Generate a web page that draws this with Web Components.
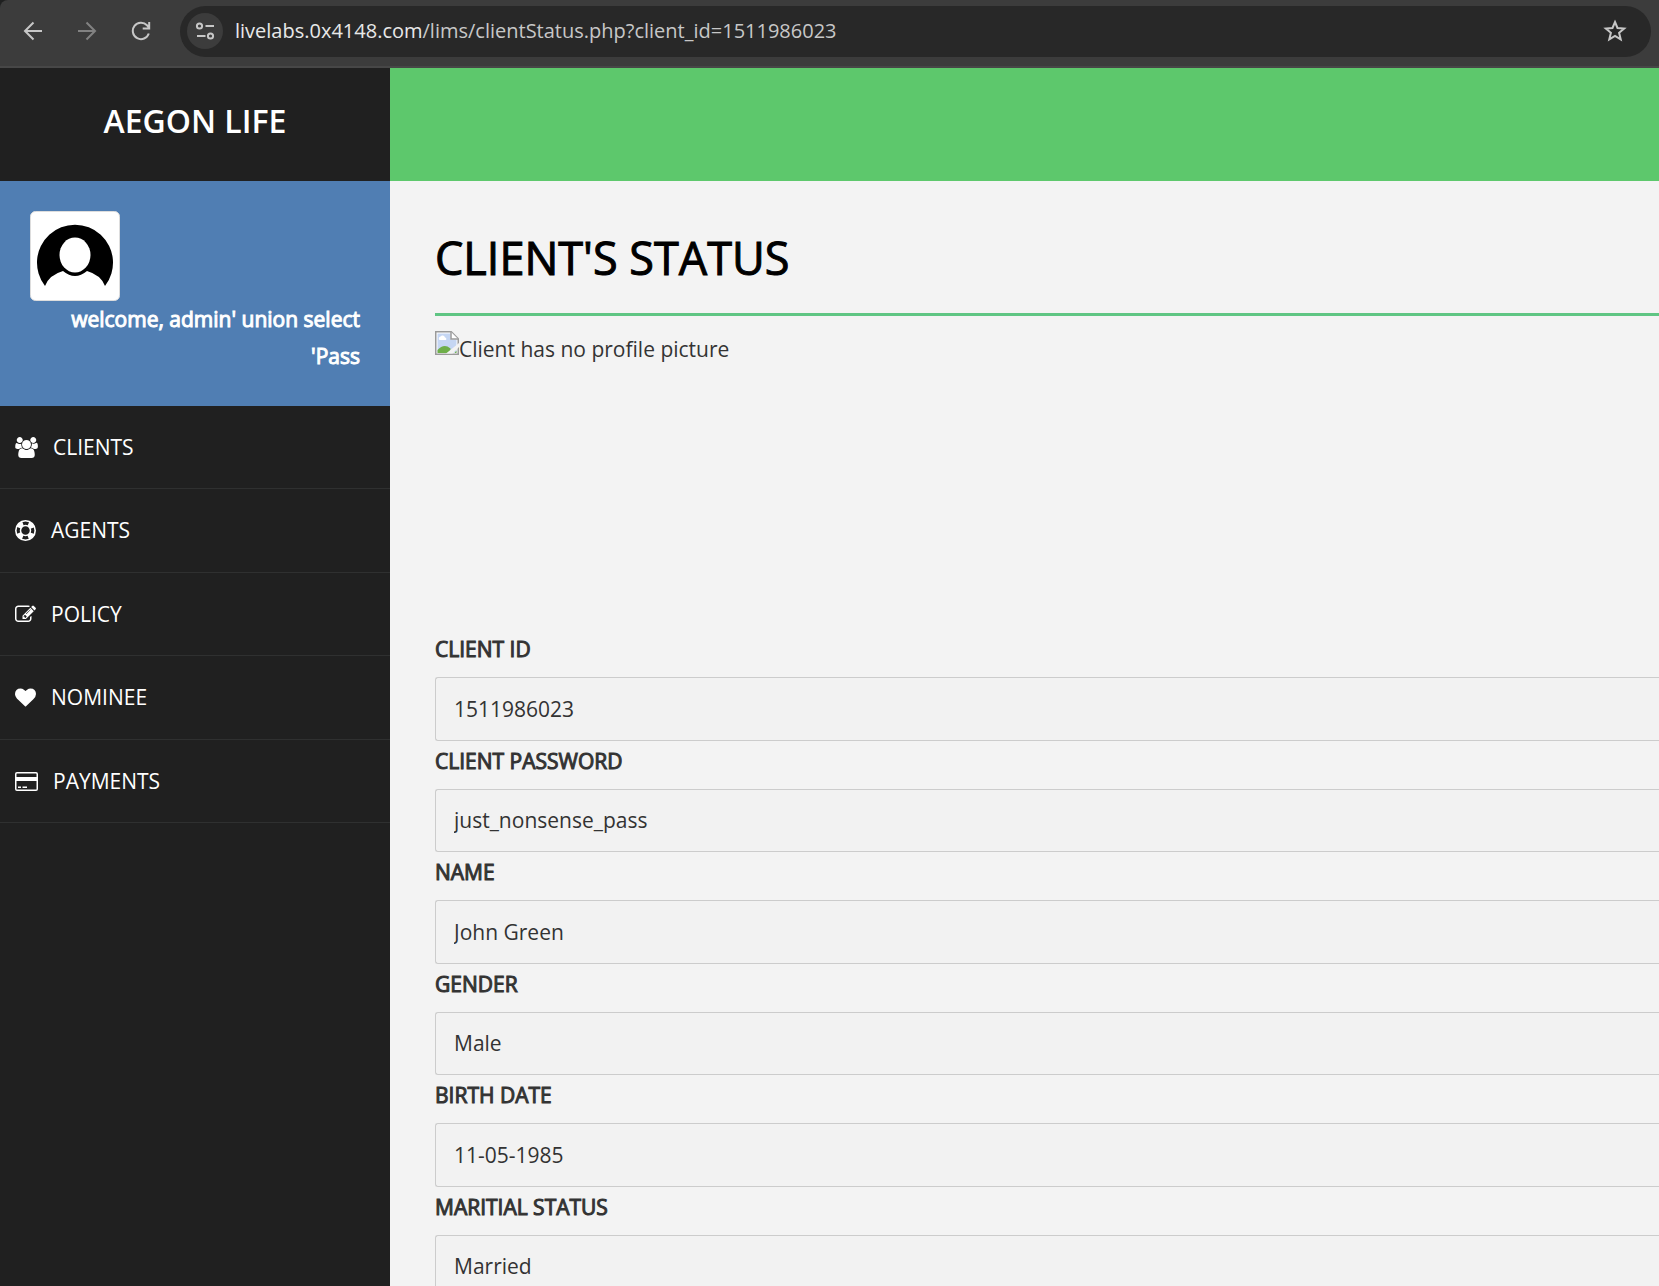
<!DOCTYPE html>
<html lang="en">
<head>
<meta charset="utf-8">
<title>Client's Status</title>
<style>
html,body{margin:0;height:100%}
body{font-family:"Open Sans","Noto Sans",sans-serif;font-size:21px;line-height:37px;color:#333;background:#f3f3f3;overflow:hidden}
</style>
</head>
<body>
<lims-app>
  <browser-bar slot="bar" host="livelabs.0x4148.com" path="/lims/clientStatus.php?client_id=1511986023"></browser-bar>
  <side-bar slot="side" brand="AEGON LIFE">
    <user-card slot="user">welcome, admin' union select 'Pass</user-card>
    <nav-item icon="users">CLIENTS</nav-item>
    <nav-item icon="ring">AGENTS</nav-item>
    <nav-item icon="edit">POLICY</nav-item>
    <nav-item icon="heart">NOMINEE</nav-item>
    <nav-item icon="card">PAYMENTS</nav-item>
  </side-bar>
  <status-page heading="CLIENT'S STATUS">
    <missing-picture slot="picture">Client has no profile picture</missing-picture>
    <form-field label="CLIENT ID" value="1511986023"></form-field>
    <form-field label="CLIENT PASSWORD" value="just_nonsense_pass"></form-field>
    <form-field label="NAME" value="John Green"></form-field>
    <form-field label="GENDER" value="Male"></form-field>
    <form-field label="BIRTH DATE" value="11-05-1985"></form-field>
    <form-field label="MARITIAL STATUS" value="Married"></form-field>
  </status-page>
</lims-app>
<script>
const define = (name, render) => customElements.define(name, class extends HTMLElement {
  constructor() { super(); this.attachShadow({ mode: 'open' }); }
  connectedCallback() { this.shadowRoot.innerHTML = render(this); }
});

const icons = {
  users: '<svg width="23" height="21" viewBox="64 0 1920 1792"><path d="M657 896q-162 5-265 128h-134q-82 0-138-40.500t-56-118.500q0-353 124-353 6 0 43.500 21t97.500 42.500 119 21.500q67 0 133-23-5 37-5 66 0 159 93 287zm1071 637q0 120-73 189.500t-194 69.500h-874q-121 0-194-69.500t-73-189.500q0-53 3.500-103.500t14-109 26.500-108.500 43-97.500 62-81 85.500-53.500 111.500-20q10 0 43 21.500t73 48 107 48 135 21.500 135-21.500 107-48 73-48 43-21.500q61 0 111.500 20t85.500 53.500 62 81 43 97.500 26.500 108.500 14 109 3.500 103.500zm-1024-1277q0 106-75 181t-181 75-181-75-75-181 75-181 181-75 181 75 75 181zm704 384q0 159-112.500 271.500t-271.500 112.500-271.500-112.500-112.500-271.500 112.500-271.500 271.500-112.500 271.500 112.500 112.500 271.500zm576 225q0 78-56 118.500t-138 40.500h-134q-103-123-265-128 93-128 93-287 0-29-5-66 66 23 133 23 59 0 119-21.500t97.500-42.500 43.500-21q124 0 124 353zm-128-609q0 106-75 181t-181 75-181-75-75-181 75-181 181-75 181 75 75 181z"/></svg>',
  ring: '<svg class="line" width="21" height="21" viewBox="0 0 21 21"><circle cx="10.500" cy="10.500" r="9.700" stroke-width="1.600"/><circle cx="10.500" cy="10.500" r="5" stroke-width="1.500"/><circle cx="10.500" cy="10.500" r="7.400" stroke-width="4.600" stroke-dasharray="6 5.624" stroke-dashoffset="-2.812"/></svg>',
  edit: '<svg width="21" height="21" viewBox="0 0 1792 1792"><path d="M888 1184l116-116-152-152-116 116v56h96v96h56zm440-720q-16-16-33 1l-350 350q-17 17-1 33t33-1l350-350q17-17 1-33zm80 594v190q0 119-84.500 203.500t-203.500 84.500h-832q-119 0-203.500-84.500t-84.500-203.500v-832q0-119 84.500-203.500t203.500-84.500h832q63 0 117 25 15 7 18 23 3 17-9 29l-49 49q-14 14-32 8-23-6-45-6h-832q-66 0-113 47t-47 113v832q0 66 47 113t113 47h832q66 0 113-47t47-113v-126q0-13 9-22l64-64q15-15 35-7t20 29zm-96-738l288 288-672 672h-288v-288zm444 132l-92 92-288-288 92-92q28-28 68-28t68 28l152 152q28 28 28 68t-28 68z"/></svg>',
  heart: '<svg width="21" height="21" viewBox="0 0 1792 1792"><path d="M896 1664q-26 0-44-18l-624-602q-10-8-27.500-26t-55.500-65.500-68-97.500-53.500-121-23.500-138q0-220 127-344t351-124q62 0 126.500 21.500t120 58 95.500 68.500 76 68q36-36 76-68t95.500-68.500 120-58 126.500-21.500q224 0 351 124t127 344q0 221-229 450l-623 600q-18 18-44 18z"/></svg>',
  card: '<svg width="23" height="21" viewBox="0 0 23 21"><path fill-rule="evenodd" d="M2 1h19a2 2 0 0 1 2 2v15a2 2 0 0 1-2 2H2a2 2 0 0 1-2-2V3a2 2 0 0 1 2-2zm0 1.500a.5.5 0 0 0-.5.5v3h20V3a.5.5 0 0 0-.5-.5zM1.500 10v8a.5.5 0 0 0 .5.500h19a.5.5 0 0 0 .5-.5v-8zM3 15.500h3V17H3zm4.500 0H12V17H7.500z"/></svg>'
};

define('lims-app', () => `
<style>
:host{display:flex;flex-direction:column;height:100vh;overflow:hidden}
.body{display:flex;flex:1;min-height:0}
::slotted(side-bar){flex:0 0 390px}
</style>
<slot name="bar"></slot>
<div class="body"><slot name="side"></slot><slot></slot></div>`);

define('browser-bar', el => `
<style>
:host{display:block;background:#1f2020}
header{display:flex;align-items:center;box-sizing:border-box;height:68px;padding:0 8px 4px 15px;background:#3c3c3c;border-bottom:2px solid #474747;border-top-left-radius:8px}
button{display:flex;align-items:center;justify-content:center;width:36px;height:36px;padding:0;border:0;border-radius:50%;background:none}
nav{display:flex;gap:18px;margin-right:21px}
svg{display:block;fill:none;stroke:#c7c7c7;stroke-width:2}
.off{opacity:.5}
.pill{flex:1;display:flex;align-items:center;box-sizing:border-box;height:51px;border-radius:26px;background:#282828;padding:0 18px 0 7px;color:#c7c7c7}
.info{background:#3c3c3c;margin-right:12px}
.url{flex:1;font-size:20px;line-height:30px;white-space:nowrap}
b{font-weight:400;color:#e8e8e8}
</style>
<header>
<nav>
<button aria-label="Back"><svg width="20" height="20" viewBox="0 0 20 20"><path d="M19 10H2.500M10.500 1.500L2 10l8.500 8.500"/></svg></button>
<button class="off" aria-label="Forward"><svg width="20" height="20" viewBox="0 0 20 20"><path d="M1 10h16.500M9.500 1.500L18 10l-8.500 8.500"/></svg></button>
<button aria-label="Reload"><svg width="20" height="20" viewBox="0 0 20 20"><path d="M17.800 12.500a8.200 8.200 0 1 1-1.800-8.200L18 6.500M18.200 1v6.500h-6.500"/></svg></button>
</nav>
<div class="pill">
<button class="info" aria-label="Site information"><svg width="20" height="20" viewBox="0 0 20 20"><circle cx="4.500" cy="5" r="2.600"/><path d="M10.500 5H19M2 15h8.500"/><circle cx="15.500" cy="15" r="2.600"/></svg></button>
<div class="url"><b>${el.getAttribute('host')}</b>${el.getAttribute('path')}</div>
<button aria-label="Bookmark"><svg width="24" height="24" viewBox="0 0 24 24"><path d="M12 3l2.500 6 6.700.5-5.100 4.300 1.600 6.500-5.700-3.500-5.700 3.500 1.600-6.500-5.100-4.300 6.700-.5z"/></svg></button>
</div>
</header>`);

define('side-bar', el => `
<style>
:host{display:block;background:#202020;color:#fff}
h1{margin:0;height:113px;font-size:32px;font-weight:600;line-height:106px;text-align:center}
nav{display:flex;flex-direction:column}
::slotted(nav-item){height:83px}
::slotted(nav-item:nth-of-type(even)){height:84px}
</style>
<h1>${el.getAttribute('brand')}</h1>
<slot name="user"></slot>
<nav><slot></slot></nav>`);

define('user-card', () => `
<style>
:host{display:block;box-sizing:border-box;height:225px;padding:30px;background:#507eb3}
svg{display:block}
p{margin:0;text-align:right;-webkit-text-stroke:1px #fff}
</style>
<svg width="90" height="90" viewBox="0 0 90 90" role="img" aria-label="User"><rect x=".5" y=".5" width="89" height="89" rx="5" fill="#fff" stroke="#ddd"/><path d="M15 75A38 38 0 1 1 75 75Q71 64 57 60Q45 70 33 60Q19 64 15 75z"/><ellipse cx="45" cy="44" rx="15.500" ry="17.500" fill="#fff"/></svg>
<p><slot></slot></p>`);

define('nav-item', el => `
<style>
:host{display:block;box-sizing:border-box;border-bottom:1px solid #2f3030}
a{display:flex;align-items:center;gap:15px;height:100%;padding-left:15px;color:#fff;text-decoration:none}
svg{flex:none;fill:#fff}
svg.line{fill:none;stroke:#fff}
</style>
<a href="#">${icons[el.getAttribute('icon')]}<span><slot></slot></span></a>`);

define('status-page', el => `
<style>
:host{display:flex;flex-direction:column;flex:1;min-width:0;background:#f3f3f3}
.band{flex:none;height:113px;background:#5dc86c}
main{padding-left:45px}
h2{box-sizing:border-box;height:135px;margin:0 0 15px;padding-top:47px;border-bottom:3px solid #5fc583;font-size:45px;font-weight:400;line-height:60px;color:#000;-webkit-text-stroke:1px #000}
::slotted(form-field){height:112px}
::slotted(form-field:nth-of-type(even)){height:111px}
</style>
<div class="band"></div>
<main><h2>${el.getAttribute('heading')}</h2><slot name="picture"></slot><form><slot></slot></form></main>`);

define('missing-picture', () => `
<style>
:host{display:flex;align-items:flex-start;height:300px}
svg{display:block}
</style>
<svg width="24" height="24" viewBox="0 0 24 24" aria-hidden="true"><path d="M.75.750h15.500l7 7v15.500H.75z" fill="#fff" stroke="#9a9a9a" stroke-width="1.500"/><path d="M2.500 2.500h13v6h6v13h-19z" fill="#c5d6f3"/><path d="M4.500 9a2 2 0 0 1 1-3.500 2.500 2.500 0 0 1 4.500 1A1.500 1.500 0 0 1 11 9z" fill="#fff"/><path d="M2.500 22v-3q5-5.500 10-3.500l3 2V22zm17 0l2-2.500V22z" fill="#6eae49"/><path d="M16 1v7h7" fill="#fff" stroke="#9a9a9a" stroke-width="1.500"/><path d="M11 22.500L24 12v4l-6.500 6.500z" fill="#f3f3f3"/></svg>
<span><slot></slot></span>`);

define('form-field', el => `
<style>
:host{display:flex;flex-direction:column;box-sizing:border-box;padding-bottom:2px}
label{display:block;margin-bottom:9px;-webkit-text-stroke:1px #333}
input{flex:1;min-height:0;width:100%;box-sizing:border-box;margin:0;padding:0 18px;border:1px solid #ccc;border-right:0;border-radius:3px 0 0 3px;background:#f2f2f2;color:#333;font:inherit;outline:0}
</style>
<label for="field">${el.getAttribute('label')}</label>
<input id="field" type="text" value="${el.getAttribute('value')}">`);
</script>
</body>
</html>
